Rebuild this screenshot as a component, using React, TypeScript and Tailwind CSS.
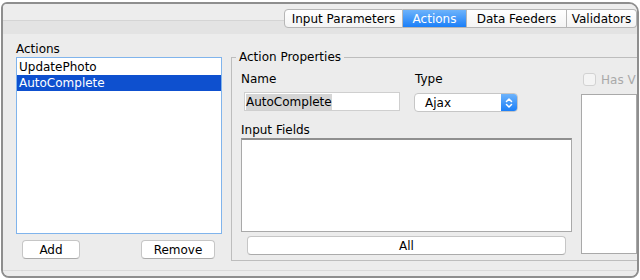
const font = "font-['DejaVu_Sans',sans-serif]";

function Tab({ label, width, active, first, last }: { label: string; width: string; active?: boolean; first?: boolean; last?: boolean }) {
  return (
    <div
      className={`${width} h-[19px] flex items-center justify-center text-[12px] leading-none border-y border-[#b6b6b6] ${
        first ? "border-l rounded-l-[4px]" : ""
      } ${last ? "border-r rounded-r-[4px]" : "border-r"} ${
        active
          ? "bg-[linear-gradient(#6db3fb,#1b7ff8)] text-white border-[#4a8fe0]"
          : "bg-[linear-gradient(#ffffff,#f4f4f4)] text-black"
      }`}
    >
      {label}
    </div>
  );
}

function MacButton({ label, className }: { label: string; className: string }) {
  return (
    <div
      className={`${className} h-[19px] flex items-center justify-center bg-white border border-[#c6c6c6] border-b-[#ababab] rounded-[4px] text-[12px] leading-none text-black`}
    >
      {label}
    </div>
  );
}

export default function App() {
  return (
    <div className={`w-[640px] h-[280px] bg-white pt-[2px] pl-[1px] ${font}`}>
      <div className="w-[638px] h-[276px] border-2 border-[#8e8e8e] rounded-tl-[6px] rounded-tr-[10px] rounded-b-[8px] bg-[#ececec] flex flex-col overflow-hidden">
        {/* Tab header */}
        <div className="relative h-[31px] shrink-0">
          <div className="h-[17px] bg-[#ededed] border-b border-[#d4d4d4]" />
          <div className="h-[13px] bg-[#e3e3e3]" />
          <div className="absolute top-[5px] right-[0px] flex">
            <Tab label="Input Parameters" width="w-[119px]" first />
            <Tab label="Actions" width="w-[64px]" active />
            <Tab label="Data Feeders" width="w-[100px]" />
            <Tab label="Validators" width="w-[70px]" last />
          </div>
        </div>

        {/* Content */}
        <div className="h-[235px] shrink-0 flex">
          {/* Actions list */}
          <div className="pl-[13px] pt-[7px] w-[219px] shrink-0">
            <div className="h-[15px] text-[12px] leading-[14px] text-black">Actions</div>
            <div className="w-[206px] h-[177px] bg-white border border-[#80b4ec] pt-[1px] text-[12px] leading-[16px]">
              <div className="h-[16px] pl-[2px] text-black">UpdatePhoto</div>
              <div className="h-[16px] pl-[2px] bg-[#0e50cf] text-white">AutoComplete</div>
            </div>
            <div className="flex justify-between pl-[6px] pr-[7px] mt-[6px] w-[206px]">
              <MacButton label="Add" className="w-[58px]" />
              <MacButton label="Remove" className="w-[74px]" />
            </div>
          </div>

          {/* Action properties */}
          <fieldset className="ml-[9px] mt-[15px] h-[211px] flex-1 border border-r-0 border-[#bdbdbd] min-w-0">
            <legend className="ml-[4px] px-[3px] text-[12px] leading-[14px] text-black">Action Properties</legend>
            <div className="flex">
              <div className="pl-[9px] pt-[8px] w-[340px] shrink-0">
                <div className="flex">
                  <div className="w-[173px]">
                    <div className="h-[14px] text-[12px] leading-[14px] text-black">Name</div>
                    <div className="ml-[3px] mt-[6px] w-[156px] h-[19px] bg-white border border-[#cfcfcf] flex items-center pl-[1px]">
                      <span className="bg-[#d5d5d5] text-[12px] leading-[16px] text-black">AutoComplete</span>
                    </div>
                  </div>
                  <div>
                    <div className="h-[14px] pl-[1px] text-[12px] leading-[14px] text-black">Type</div>
                    <div className="mt-[7px] w-[104px] h-[19px] flex bg-white border border-[#c6c6c6] rounded-[4px] overflow-hidden">
                      <div className="flex-1 flex items-center pl-[10px] text-[12px] leading-none text-black">Ajax</div>
                      <div className="w-[16px] bg-[linear-gradient(#6db3fb,#1b7ff8)] flex items-center justify-center">
                        <svg width="8" height="12" viewBox="0 0 8 12" fill="none" stroke="white" strokeWidth="1.5" strokeLinecap="round" strokeLinejoin="round">
                          <path d="M1.5 4.5 L4 2 L6.5 4.5" />
                          <path d="M1.5 7.5 L4 10 L6.5 7.5" />
                        </svg>
                      </div>
                    </div>
                  </div>
                </div>
                <div className="mt-[11px] h-[15px] text-[12px] leading-[14px] text-black">Input Fields</div>
                <div className="w-[331px] h-[94px] bg-white border border-[#a9a9a9] border-t-2 border-t-[#8f8f8f]" />
                <MacButton label="All" className="ml-[6px] mt-[4px] w-[319px]" />
              </div>
              <div className="pl-[9px] pt-[9px] flex-1 min-w-0">
                <div className="flex items-center gap-[5px] pl-[2px] h-[13px]">
                  <div className="w-[13px] h-[13px] border border-[#d2d2d2] bg-[#f4f4f4] rounded-[3px] shrink-0" />
                  <span className="text-[12px] leading-none text-[#a9a9a9] whitespace-nowrap">Has V</span>
                </div>
                <div className="mt-[8px] h-[160px] bg-white border border-[#a9a9a9]" />
              </div>
            </div>
          </fieldset>
        </div>

        {/* Bottom edge */}
        <div className="flex-1 border-t border-[#dadada] bg-[#ececec]" />
      </div>
    </div>
  );
}
